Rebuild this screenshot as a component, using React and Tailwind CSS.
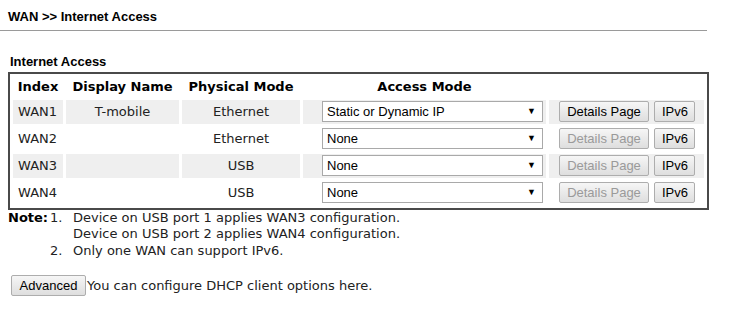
const rows = [
  { index: "WAN1", name: "T-mobile", mode: "Ethernet", access: "Static or Dynamic IP", details: true },
  { index: "WAN2", name: "", mode: "Ethernet", access: "None", details: false },
  { index: "WAN3", name: "", mode: "USB", access: "None", details: false },
  { index: "WAN4", name: "", mode: "USB", access: "None", details: false },
];

const Btn = ({ children, disabled, className = "" }) => (
  <button
    className={`h-[21px] rounded-[2px] border border-[#adadad] bg-gradient-to-b from-[#f6f6f6] to-[#dedede] px-[7px] text-[13px] leading-none font-['Liberation_Sans',Arial,sans-serif] ${
      disabled ? "text-[#9a9a9a]" : "text-black"
    } ${className}`}
  >
    {children}
  </button>
);

const App = () => {
  return (
    <div className="w-[741px] h-[310px] bg-white text-[#222] font-['DejaVu_Sans',Verdana,sans-serif]">
      <div className="pl-2 pt-[9px] text-[13px] leading-[15px] font-bold text-black font-['Liberation_Sans',Arial,sans-serif]">
        WAN &gt;&gt; Internet Access
      </div>
      <div className="mt-[6px] h-px w-[707px] bg-[#9a9a9a]" />

      <div className="mt-[23px] pl-[10px] text-[13px] leading-[15px] font-bold text-black font-['Liberation_Sans',Arial,sans-serif]">
        Internet Access
      </div>

      <table className="ml-2 mt-[3px] border-2 border-[#4a4a4a] border-separate border-spacing-[3px] text-[13px]">
        <thead>
          <tr className="h-[18px] font-bold text-black">
            <th className="w-[50px] font-bold">Index</th>
            <th className="w-[113px] font-bold">Display Name</th>
            <th className="w-[118px] font-bold">Physical Mode</th>
            <th className="w-[243px] font-bold">Access Mode</th>
            <th className="w-[155px]"></th>
          </tr>
        </thead>
        <tbody>
          {rows.map((r, i) => {
            const bg = i % 2 === 0 ? "bg-[#efefef]" : "bg-white";
            return (
              <tr key={r.index} className="h-[24px]">
                <td className={`${bg} pl-[5px]`}>{r.index}</td>
                <td className={`${bg} text-center`}>{r.name}</td>
                <td className={`${bg} text-center`}>{r.mode}</td>
                <td className={`${bg} pl-[19px]`}>
                  <div className="flex h-[21px] w-[221px] items-center justify-between border border-[#a9a9a9] bg-white pl-[4px] pr-[6px] text-[13px] text-black font-['Liberation_Sans',Arial,sans-serif]">
                    <span>{r.access}</span>
                    <span className="text-[9px]">▼</span>
                  </div>
                </td>
                <td className={`${bg} pl-[10px]`}>
                  <div className="flex gap-[5px]">
                    <Btn disabled={!r.details} className="w-[90px]">Details Page</Btn>
                    <Btn className="w-[41px]">IPv6</Btn>
                  </div>
                </td>
              </tr>
            );
          })}
        </tbody>
      </table>

      <div className="flex pl-2 text-[13px] leading-[16.5px]">
        <span className="w-[42px] font-bold text-black">Note:</span>
        <div>
          <div className="flex">
            <span className="w-[23px]">1.</span>
            <div>
              <div>Device on USB port 1 applies WAN3 configuration.</div>
              <div>Device on USB port 2 applies WAN4 configuration.</div>
            </div>
          </div>
          <div className="flex">
            <span className="w-[23px]">2.</span>
            <div>Only one WAN can support IPv6.</div>
          </div>
        </div>
      </div>

      <div className="mt-[16px] flex items-center pl-[11px] text-[13px]">
        <Btn className="w-[75px]">Advanced</Btn>
        <span className="ml-[1px]">You can configure DHCP client options here.</span>
      </div>
    </div>
  );
};

export default App;
